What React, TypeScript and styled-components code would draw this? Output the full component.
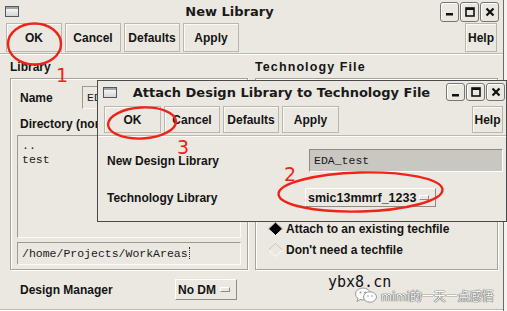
import React from "react";
import styled, { createGlobalStyle } from "styled-components";

const BG = "#ebe8e2";
const INK = "#141414";
const RED = "#ee2419";

const GlobalStyle = createGlobalStyle`
  html, body {
    margin: 0;
    padding: 0;
    overflow: hidden;
    background: #f4f3f0;
  }
  body {
    font-family: "Liberation Sans", Arial, sans-serif;
    color: ${INK};
  }
`;

const Desktop = styled.div`
  position: relative;
  width: 507px;
  height: 311px;
  overflow: hidden;
  background: #f4f3f0;
`;

/* ---------- window chrome ---------- */

const Window = styled.div`
  box-sizing: border-box;
  background: ${BG};
  display: flex;
  flex-direction: column;
`;

const MainWindow = styled(Window)`
  width: 504px;
  height: 311px;
  border-right: 1px solid #6c6a66;
`;

const DialogWindow = styled(Window)`
  position: absolute;
  left: 97px;
  top: 80px;
  width: 410px;
  height: 142px;
  border: 1px solid #4a4a4a;
`;

const TitleBar = styled.div<{ $h: number; $pad: string }>`
  height: ${(p) => p.$h}px;
  flex-shrink: 0;
  display: flex;
  align-items: center;
  padding: ${(p) => p.$pad};
`;

const TitleIcon = styled.div`
  box-sizing: border-box;
  width: 14px;
  height: 11px;
  border: 1px solid #55575c;
  background: linear-gradient(#ffffff, #d4d4d6);
  box-shadow: inset 0 2px 0 #9fa3aa;
`;

const TitleText = styled.div`
  flex: 1;
  text-align: center;
  font-family: "DejaVu Sans", sans-serif;
  font-weight: bold;
  font-size: 13px;
  color: #1a1a1a;
  white-space: nowrap;
`;

const WinButtons = styled.div`
  display: flex;
  gap: 1px;
`;

const WinButton = styled.div<{ $h: number }>`
  box-sizing: border-box;
  width: 19px;
  height: ${(p) => p.$h}px;
  border: 1px solid #777672;
  border-radius: 3px;
  background: ${BG};
  box-shadow: inset 1px 1px 0 #fff;
  display: flex;
  align-items: center;
  justify-content: center;
`;

const MinGlyph = () => (
  <svg width="9" height="9" viewBox="0 0 9 9">
    <rect x="1" y="6" width="7" height="2.5" fill="#111" />
  </svg>
);

const MaxGlyph = () => (
  <svg width="10" height="10" viewBox="0 0 10 10">
    <rect x="1" y="1" width="8" height="8" fill="none" stroke="#111" strokeWidth="1.6" />
    <rect x="1" y="1" width="8" height="2" fill="#111" />
  </svg>
);

const CloseGlyph = () => (
  <svg width="10" height="10" viewBox="0 0 10 10">
    <path d="M1.5 1.5 L8.5 8.5 M8.5 1.5 L1.5 8.5" stroke="#111" strokeWidth="2.2" />
  </svg>
);

const WindowControls = ({ h }: { h: number }) => (
  <WinButtons>
    <WinButton $h={h}>
      <MinGlyph />
    </WinButton>
    <WinButton $h={h}>
      <MaxGlyph />
    </WinButton>
    <WinButton $h={h}>
      <CloseGlyph />
    </WinButton>
  </WinButtons>
);

/* ---------- toolbar ---------- */

const Toolbar = styled.div<{ $h: number; $pad: string }>`
  height: ${(p) => p.$h}px;
  flex-shrink: 0;
  display: flex;
  gap: 3px;
  padding: ${(p) => p.$pad};
`;

const ToolButton = styled.button<{ $w: number; $push?: boolean }>`
  box-sizing: border-box;
  width: ${(p) => p.$w}px;
  height: 100%;
  margin: 0;
  margin-left: ${(p) => (p.$push ? "auto" : "0")};
  padding: 0;
  border: 1px solid #bab7af;
  background: ${BG};
  box-shadow: inset 1px 1px 0 #fbfaf7;
  font-family: "Liberation Sans", Arial, sans-serif;
  font-weight: bold;
  font-size: 12px;
  color: ${INK};
  cursor: default;
`;

const Rule = styled.div`
  flex-shrink: 0;
  height: 0;
  border-top: 1px solid #bbb8b0;
  border-bottom: 1px solid #fff;
`;

/* ---------- main form ---------- */

const Body = styled.div`
  display: grid;
  grid-template-columns: 238px 243px;
  column-gap: 7px;
  padding-left: 10px;
`;

const Group = styled.div`
  display: flex;
  flex-direction: column;
`;

const GroupLabel = styled.div<{ $wide?: boolean }>`
  height: 23px;
  line-height: 24px;
  font-weight: bold;
  font-size: ${(p) => (p.$wide ? "12.5px" : "12px")};
  letter-spacing: ${(p) => (p.$wide ? "1.1px" : "0")};
  white-space: nowrap;
`;

const Frame = styled.div<{ $end?: boolean }>`
  box-sizing: border-box;
  height: 192px;
  border: 1px solid #a7a49d;
  box-shadow: inset 1px 1px 0 #fff, 1px 1px 0 #fff;
  display: flex;
  flex-direction: column;
  justify-content: ${(p) => (p.$end ? "flex-end" : "flex-start")};
  padding: ${(p) => (p.$end ? "0 0 9px 12px" : "7px 6px 4px 6px")};
`;

const FieldRow = styled.div`
  height: 23px;
  display: flex;
  align-items: center;
`;

const FieldLabel = styled.div<{ $w?: number; $drop?: number }>`
  width: ${(p) => (p.$w ? `${p.$w}px` : "auto")};
  flex-shrink: 0;
  padding-left: 3px;
  margin-top: ${(p) => p.$drop ?? 0}px;
  font-weight: bold;
  font-size: 12px;
  line-height: 14px;
  white-space: nowrap;
`;

const sunken = `
  box-sizing: border-box;
  border: 1px solid;
  border-color: #9d9a93 #fbfaf8 #fbfaf8 #9d9a93;
  font-family: "Liberation Mono", "Courier New", monospace;
  font-size: 11.5px;
  color: #1a1a1a;
`;

const TextBox = styled.div<{ $w?: number; $grey?: boolean }>`
  ${sunken}
  width: ${(p) => (p.$w ? `${p.$w}px` : "100%")};
  height: 23px;
  line-height: 21px;
  padding-left: 4px;
  white-space: nowrap;
  overflow: hidden;
  background: ${(p) => (p.$grey ? "#c9c7c2" : BG)};
  border-color: ${(p) => (p.$grey ? "#8d8b86 #fff #fff #8d8b86" : "#9d9a93 #fbfaf8 #fbfaf8 #9d9a93")};
`;

const DirLabel = styled(FieldLabel)`
  height: 22px;
  line-height: 22px;
  margin-top: 4px;
`;

const ListBox = styled.div`
  ${sunken}
  height: 103px;
  padding: 3px 0 0 4px;
  line-height: 14px;
  background: ${BG};
`;

const PathBox = styled(TextBox)`
  margin-top: 4px;
`;

const Caret = styled.span`
  display: inline-block;
  width: 1px;
  height: 12px;
  margin-left: 1px;
  vertical-align: -2px;
  border-left: 1px dotted #222;
`;

const RadioRow = styled.div`
  height: 21px;
  display: flex;
  align-items: center;
  gap: 3px;
  font-weight: bold;
  font-size: 12px;
  white-space: nowrap;
`;

const Diamond = ({ on }: { on: boolean }) => (
  <svg width="15" height="14" viewBox="0 0 15 14">
    <polygon points="7.5,0.5 14.5,7 7.5,13.5 0.5,7" fill={on ? "#000" : BG} />
    <polyline points="0.5,7 7.5,0.5 14.5,7" fill="none" stroke={on ? "#8a8780" : "#c8c5be"} strokeWidth="1" />
    <polyline points="0.5,7 7.5,13.5 14.5,7" fill="none" stroke="#fff" strokeWidth="1" />
  </svg>
);

const Footer = styled.div`
  height: 39px;
  flex-shrink: 0;
  display: flex;
  align-items: center;
  padding-left: 17px;
`;

const OptionButton = styled.div<{ $w: number }>`
  box-sizing: border-box;
  width: ${(p) => p.$w}px;
  height: ${(p) => (p.$w > 100 ? 19 : 21)}px;
  display: flex;
  align-items: center;
  justify-content: space-between;
  padding: 0 6px 0 2px;
  border: 1px solid;
  border-color: #fff #8f8c86 #8f8c86 #fff;
  background: ${BG};
  font-weight: bold;
  font-size: ${(p) => (p.$w > 100 ? "12.5px" : "12px")};
  white-space: nowrap;
`;

const OptionMark = styled.span`
  box-sizing: border-box;
  width: 10px;
  height: 5px;
  border: 1px solid;
  border-color: #fff #8f8c86 #8f8c86 #fff;
`;

/* ---------- dialog form ---------- */

const DialogForm = styled.div`
  display: grid;
  grid-template-columns: 205px 194px;
  grid-template-rows: 23px 22px;
  row-gap: 14px;
  align-items: center;
  padding: 12px 0 0 6px;
`;

const DialogOption = styled.div`
  align-self: start;
  margin: 2px 0 0 -4px;
`;

/* ---------- overlays ---------- */

const Watermark = styled.div`
  position: absolute;
  left: 328px;
  top: 275px;
  display: flex;
  flex-direction: column;
`;

const SiteText = styled.div`
  font-family: "DejaVu Sans Mono", monospace;
  font-size: 15px;
  line-height: 15px;
  color: #111;
`;

const Account = styled.div`
  display: flex;
  align-items: center;
  gap: 3px;
  margin: -4px 0 0 26px;
  font-family: "Noto Sans CJK SC", "DejaVu Sans", sans-serif;
  font-size: 12px;
  color: #fbfbfb;
  text-shadow: 0 0 1px #555, 0 0 1px #555, 0 0 1px #666;
  white-space: nowrap;
`;

const WeChatMark = () => (
  <svg width="24" height="18" viewBox="0 0 24 18">
    <ellipse cx="9" cy="8" rx="7.5" ry="6" fill="#fdfdfd" stroke="#9a9a9a" strokeWidth="1" />
    <path d="M4 12 L3 15.5 L7 13.2" fill="#fdfdfd" stroke="#9a9a9a" strokeWidth="1" />
    <ellipse cx="16" cy="11" rx="6.5" ry="5.2" fill="#fdfdfd" stroke="#9a9a9a" strokeWidth="1" />
    <circle cx="6.5" cy="6.5" r="1" fill="#9a9a9a" />
    <circle cx="11" cy="6.5" r="1" fill="#9a9a9a" />
    <circle cx="14" cy="10" r="0.8" fill="#9a9a9a" />
    <circle cx="18" cy="10" r="0.8" fill="#9a9a9a" />
  </svg>
);

const Marks = styled.svg`
  position: absolute;
  left: 0;
  top: 0;
  pointer-events: none;
`;

const StepNumber = styled.span<{ $x: number; $y: number }>`
  position: absolute;
  left: ${(p) => p.$x}px;
  top: ${(p) => p.$y}px;
  font-family: "DejaVu Sans", sans-serif;
  font-size: 19px;
  line-height: 19px;
  color: ${RED};
`;

export default function App() {
  return (
    <>
      <GlobalStyle />
      <Desktop>
        <MainWindow>
          <TitleBar $h={23} $pad="0 4px 0 5px">
            <TitleIcon />
            <TitleText>New Library</TitleText>
            <WindowControls h={20} />
          </TitleBar>
          <Toolbar $h={29} $pad="0 6px 0 6px">
            <ToolButton $w={56}>OK</ToolButton>
            <ToolButton $w={56}>Cancel</ToolButton>
            <ToolButton $w={56}>Defaults</ToolButton>
            <ToolButton $w={56}>Apply</ToolButton>
            <ToolButton $w={32} $push>
              Help
            </ToolButton>
          </Toolbar>
          <Rule style={{ marginTop: 1 }} />
          <Body>
            <Group>
              <GroupLabel>Library</GroupLabel>
              <Frame>
                <FieldRow>
                  <FieldLabel $w={62}>Name</FieldLabel>
                  <TextBox $w={150}>EDA_test</TextBox>
                </FieldRow>
                <DirLabel>Directory (non-editable)</DirLabel>
                <ListBox>
                  ..
                  <br />
                  test
                </ListBox>
                <PathBox>
                  /home/Projects/WorkAreas
                  <Caret />
                </PathBox>
              </Frame>
            </Group>
            <Group>
              <GroupLabel $wide>Technology File</GroupLabel>
              <Frame $end>
                <RadioRow>
                  <Diamond on={false} />
                  Compile a new techfile
                </RadioRow>
                <RadioRow>
                  <Diamond on />
                  Attach to an existing techfile
                </RadioRow>
                <RadioRow>
                  <Diamond on={false} />
                  Don't need a techfile
                </RadioRow>
              </Frame>
            </Group>
          </Body>
          <Footer>
            <FieldLabel $w={155}>Design Manager</FieldLabel>
            <OptionButton $w={62}>
              No DM
              <OptionMark />
            </OptionButton>
          </Footer>
          <Rule />
        </MainWindow>

        <DialogWindow>
          <TitleBar $h={22} $pad="0 1px 0 5px">
            <TitleIcon />
            <TitleText>Attach Design Library to Technology File</TitleText>
            <WindowControls h={18} />
          </TitleBar>
          <Toolbar $h={27} $pad="0 3px 0 6px" style={{ marginTop: 3, marginBottom: 2 }}>
            <ToolButton $w={57}>OK</ToolButton>
            <ToolButton $w={56}>Cancel</ToolButton>
            <ToolButton $w={56}>Defaults</ToolButton>
            <ToolButton $w={57}>Apply</ToolButton>
            <ToolButton $w={31} $push>
              Help
            </ToolButton>
          </Toolbar>
          <Rule />
          <DialogForm>
            <FieldLabel>New Design Library</FieldLabel>
            <TextBox $grey>EDA_test</TextBox>
            <FieldLabel $drop={5} style={{ alignSelf: "start" }}>
              Technology Library
            </FieldLabel>
            <DialogOption>
              <OptionButton $w={131}>
                smic13mmrf_1233
                <OptionMark />
              </OptionButton>
            </DialogOption>
          </DialogForm>
        </DialogWindow>

        <Watermark>
          <SiteText>ybx8.cn</SiteText>
          <Account>
            <WeChatMark />
            mimi的一天一点感悟
          </Account>
        </Watermark>

        <Marks width="507" height="311" viewBox="0 0 507 311">
          <ellipse cx="34.5" cy="44" rx="26.5" ry="20.5" fill="none" stroke={RED} strokeWidth="2.4" />
          <ellipse cx="142" cy="123" rx="34" ry="15.5" fill="none" stroke={RED} strokeWidth="2.4" transform="rotate(-3 142 123)" />
          <ellipse cx="360.5" cy="192" rx="82" ry="19.5" fill="none" stroke={RED} strokeWidth="2.4" transform="rotate(-1.5 360 192)" />
        </Marks>
        <StepNumber $x={56} $y={66}>1</StepNumber>
        <StepNumber $x={284} $y={165}>2</StepNumber>
        <StepNumber $x={177} $y={138}>3</StepNumber>
      </Desktop>
    </>
  );
}
